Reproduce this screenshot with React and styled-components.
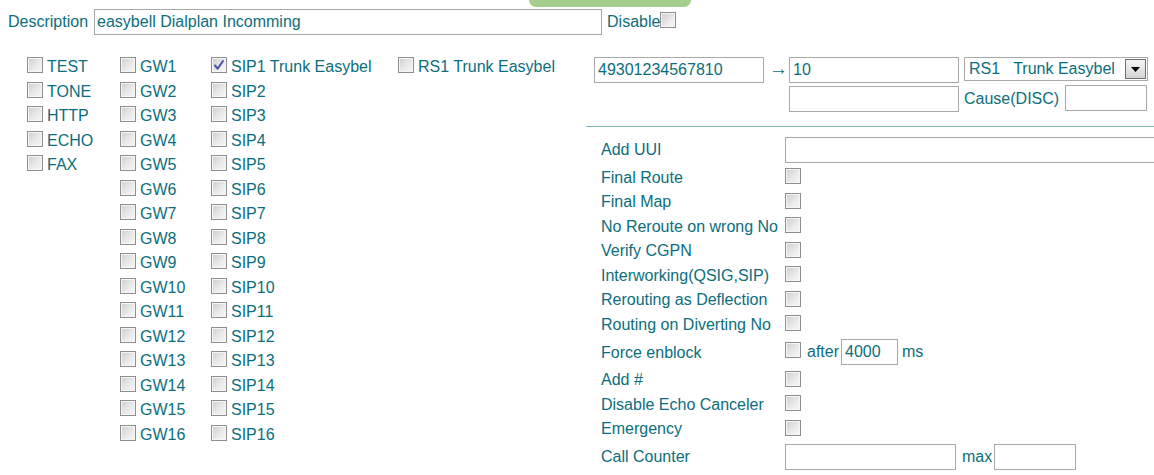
import React from 'react'
import styled, { createGlobalStyle } from 'styled-components'

const TEAL = '#0c6e7c'
const ROW = 24.5

const GlobalStyle = createGlobalStyle`
  html, body {
    margin: 0;
    padding: 0;
    background: #fff;
    overflow: hidden;
  }
  body {
    font-family: "Liberation Sans", Arial, sans-serif;
    font-size: 16px;
    color: ${TEAL};
  }
`

const Page = styled.div`
  width: 1154px;
  height: 475px;
  overflow: hidden;
`

const Header = styled.div`
  height: 7px;
  display: flex;
`

const Tab = styled.div`
  margin-left: 529px;
  width: 162px;
  height: 7px;
  background: #a5ce8d;
  border-radius: 0 0 7px 7px;
`

const DescRow = styled.div`
  display: flex;
  align-items: center;
  margin-top: 2px;
  padding-left: 8px;
  height: 26px;
`

const Text = styled.span`
  white-space: pre;
  line-height: 18px;
  margin-left: ${p => p.$ml || 0}px;
  margin-right: ${p => p.$mr || 0}px;
`

const TextInput = styled.input`
  box-sizing: border-box;
  width: ${p => p.$w}px;
  height: ${p => p.$h || 26}px;
  border: 1px solid #a9a9a9;
  padding: 0 3px;
  margin: 0;
  font: inherit;
  color: ${TEAL};
  background: #fff;
  outline: none;
  flex: none;
`

const Box = styled.span`
  box-sizing: border-box;
  display: inline-flex;
  align-items: center;
  justify-content: center;
  flex: none;
  width: 16px;
  height: 16px;
  border: 1px solid #8e8e8e;
  box-shadow: inset 0 0 0 1px #f6f6f6;
  background: linear-gradient(135deg, #cdcdcd 0%, #e9e9e9 55%, #f8f8f8 100%);
  margin-top: ${p => p.$mt || 0}px;
`

const Check = ({ checked, mt }) => (
  <Box $mt={mt} role="checkbox" aria-checked={!!checked}>
    {checked && (
      <svg width="12" height="12" viewBox="0 0 12 12">
        <path d="M2 6.5 L4.6 9.6 L10 2" fill="none" stroke="#4a4fa8" strokeWidth="2" strokeLinecap="round" strokeLinejoin="round" />
      </svg>
    )}
  </Box>
)

const Main = styled.div`
  display: flex;
`

const LeftPane = styled.div`
  width: 586px;
  flex: none;
  display: flex;
  padding: 20px 0 0 27px;
  box-sizing: border-box;
`

const CheckColumn = styled.div`
  width: ${p => p.$w}px;
  flex: none;
  display: flex;
  flex-direction: column;
`

const CheckItem = styled.label`
  height: ${ROW}px;
  display: flex;
  align-items: center;
  gap: 4px;
  white-space: nowrap;
`

const RightPane = styled.div`
  flex: 1;
  display: flex;
  flex-direction: column;
`

const MapGrid = styled.div`
  display: grid;
  grid-template-columns: 170px 15px 170px 184px;
  column-gap: 5px;
  row-gap: 3px;
  padding: 22px 0 0 8px;
  align-items: center;
`

const Arrow = styled.span`
  text-align: center;
  font-size: 19px;
  line-height: 18px;
  margin-top: -3px;
`

const Select = styled.div`
  box-sizing: border-box;
  height: 24px;
  width: 184px;
  border: 1px solid #a9a9a9;
  display: flex;
  align-items: center;
  justify-content: space-between;
  padding: 0 1px 0 4px;
  align-self: start;
`

const SelectButton = styled.span`
  box-sizing: border-box;
  width: 21px;
  height: 20px;
  border: 1px solid #6f6f6f;
  background: linear-gradient(#f4f4f4, #d4d4d4);
  display: flex;
  align-items: center;
  justify-content: center;
`

const CauseCell = styled.div`
  display: flex;
  align-items: center;
  gap: 6px;
`

const Divider = styled.div`
  height: 1px;
  background: #7fb2be;
  margin-top: 14px;
`

const OptionList = styled.div`
  display: flex;
  flex-direction: column;
  padding: 7px 0 0 15px;
`

const OptionRow = styled.div`
  height: ${p => p.$h}px;
  display: flex;
  align-items: center;
`

const OptLabel = styled.span`
  width: 184px;
  flex: none;
  white-space: nowrap;
  line-height: 18px;
  padding-top: 1px;
`

const Controls = styled.div`
  display: flex;
  align-items: center;
`

const col1 = ['TEST', 'TONE', 'HTTP', 'ECHO', 'FAX']
const gws = Array.from({ length: 16 }, (_, i) => `GW${i + 1}`)
const sips = Array.from({ length: 16 }, (_, i) => (i === 0 ? 'SIP1 Trunk Easybel' : `SIP${i + 1}`))

const checkOptions = [
  'Final Route',
  'Final Map',
  'No Reroute on wrong No',
  'Verify CGPN',
  'Interworking(QSIG,SIP)',
  'Rerouting as Deflection',
  'Routing on Diverting No',
]

const INPUT_ROW = 31

export default function App() {
  return (
    <Page>
      <GlobalStyle />
      <Header>
        <Tab />
      </Header>
      <DescRow>
        <Text $mr={6}>Description</Text>
        <TextInput $w={508} defaultValue="easybell Dialplan Incomming" style={{ paddingLeft: 2 }} />
        <Text $ml={5}>Disable</Text>
        <Check mt={-4} />
      </DescRow>

      <Main>
        <LeftPane>
          <CheckColumn $w={93}>
            {col1.map(t => (
              <CheckItem key={t}>
                <Check mt={-4} />
                {t}
              </CheckItem>
            ))}
          </CheckColumn>
          <CheckColumn $w={91}>
            {gws.map(t => (
              <CheckItem key={t}>
                <Check mt={-4} />
                {t}
              </CheckItem>
            ))}
          </CheckColumn>
          <CheckColumn $w={187}>
            {sips.map((t, i) => (
              <CheckItem key={t}>
                <Check checked={i === 0} mt={-4} />
                {t}
              </CheckItem>
            ))}
          </CheckColumn>
          <CheckColumn $w={180}>
            <CheckItem>
              <Check mt={-4} />
              RS1 Trunk Easybel
            </CheckItem>
          </CheckColumn>
        </LeftPane>

        <RightPane>
          <MapGrid>
            <TextInput $w={170} defaultValue="49301234567810" />
            <Arrow>→</Arrow>
            <TextInput $w={170} defaultValue="10" />
            <Select>
              <Text>RS1   Trunk Easybel</Text>
              <SelectButton>
                <svg width="9" height="5" viewBox="0 0 9 5">
                  <path d="M0 0 H9 L4.5 5 Z" fill="#000" />
                </svg>
              </SelectButton>
            </Select>
            <span />
            <span />
            <TextInput $w={170} />
            <CauseCell>
              <Text>Cause(DISC)</Text>
              <TextInput $w={82} style={{ marginTop: -2 }} />
            </CauseCell>
          </MapGrid>

          <Divider />

          <OptionList>
            <OptionRow $h={INPUT_ROW}>
              <OptLabel>Add UUI</OptLabel>
              <TextInput $w={400} />
            </OptionRow>
            {checkOptions.map(t => (
              <OptionRow key={t} $h={ROW}>
                <OptLabel>{t}</OptLabel>
                <Check mt={-2} />
              </OptionRow>
            ))}
            <OptionRow $h={INPUT_ROW}>
              <OptLabel>Force enblock</OptLabel>
              <Controls>
                <Check mt={-4} />
                <Text $ml={6} $mr={2}>after</Text>
                <TextInput $w={57} defaultValue="4000" />
                <Text $ml={4}>ms</Text>
              </Controls>
            </OptionRow>
            {['Add #', 'Disable Echo Canceler', 'Emergency'].map(t => (
              <OptionRow key={t} $h={ROW}>
                <OptLabel>{t}</OptLabel>
                <Check mt={-2} />
              </OptionRow>
            ))}
            <OptionRow $h={INPUT_ROW}>
              <OptLabel>Call Counter</OptLabel>
              <Controls>
                <TextInput $w={171} />
                <Text $ml={6} $mr={2}>max</Text>
                <TextInput $w={82} />
              </Controls>
            </OptionRow>
          </OptionList>
        </RightPane>
      </Main>
    </Page>
  )
}
